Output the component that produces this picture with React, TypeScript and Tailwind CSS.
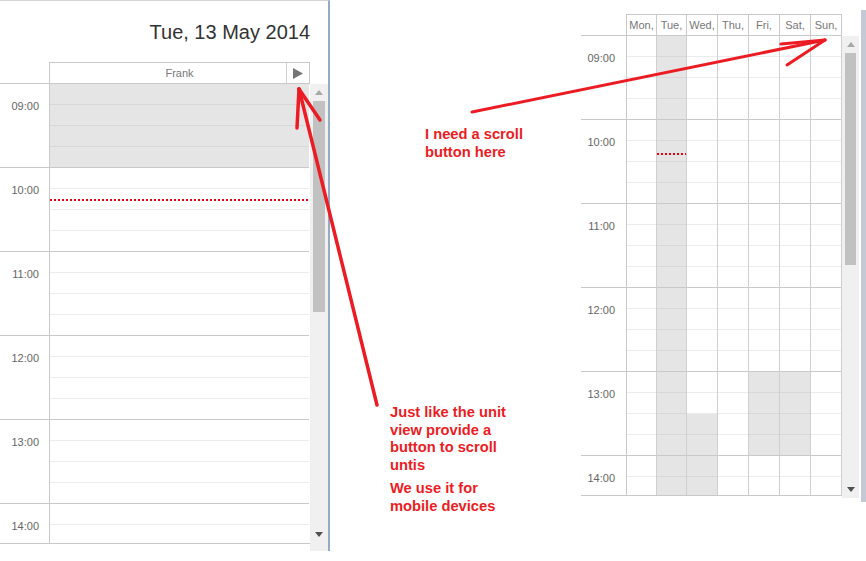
import React from "react";
import clsx from "clsx";

const hours = ["09:00", "10:00", "11:00", "12:00", "13:00", "14:00"];
const slots = Array.from({ length: 22 }, (_, i) => i);
const days = ["Mon,", "Tue,", "Wed,", "Thu,", "Fri,", "Sat,", "Sun,"];
const dayWidths = ["w-[30px]", "w-[30px]", "w-[31px]", "w-[31px]", "w-[31px]", "w-[31px]", "w-[31px]"];

// which quarter slots are greyed out per week day (0 = 09:00)
const weekGray: Record<number, (i: number) => boolean> = {
  1: () => true,
  2: (i) => i >= 18,
  4: (i) => i >= 16 && i <= 19,
  5: (i) => i >= 16 && i <= 19,
};

const Slot = ({ i, gray }: { i: number; gray: boolean }) => (
  <div
    className={clsx(
      "h-[21px] border-b",
      i % 4 === 3 ? "border-[#c9c9c9]" : gray ? "border-[#d8d8d8]" : "border-[#ececec]",
      gray ? "bg-[#e5e5e5]" : "bg-white"
    )}
  />
);

const TimeColumn = ({ width, pr }: { width: string; pr: string }) => (
  <div className={clsx("shrink-0 border-r border-[#c9c9c9]", width)}>
    {hours.map((h) => (
      <div key={h} className={clsx("h-[84px] border-b border-[#c9c9c9] pt-[16px] text-right text-[11px] leading-[13px] text-[#666]", pr)}>
        {h}
      </div>
    ))}
  </div>
);

const NowLine = ({ top }: { top: string }) => (
  <div className={clsx("absolute left-0 right-0 h-[2px] bg-[repeating-linear-gradient(90deg,#e6000f_0_2px,transparent_2px_4px)]", top)} />
);

const UpArrow = () => (
  <svg width="8" height="5" viewBox="0 0 8 5">
    <polygon points="0,5 8,5 4,0" fill="#a8a8a8" />
  </svg>
);

const DownArrow = () => (
  <svg width="8" height="5" viewBox="0 0 8 5">
    <polygon points="0,0 8,0 4,5" fill="#505050" />
  </svg>
);

const ScrollBar = ({ size, thumb }: { size: string; thumb: string }) => (
  <div className={clsx("flex shrink-0 flex-col bg-[#f0f0f0]", size)}>
    <div className="flex h-[17px] items-center justify-center">
      <UpArrow />
    </div>
    <div className={clsx("mx-[3px] bg-[#c1c1c1]", thumb)} />
    <div className="flex-1" />
    <div className="flex h-[17px] items-center justify-center">
      <DownArrow />
    </div>
  </div>
);

const UnitView = () => (
  <div className="flex h-[551px] w-[330px] shrink-0 flex-col border-t border-r-2 border-t-[#d4d4d4] border-r-[#95aac4] bg-white">
    {/* Date title */}
    <div className="flex h-[61px] items-center justify-end pr-[18px] text-[20px] text-[#333]">
      Tue, 13 May 2014
    </div>

    {/* Unit header */}
    <div className="flex h-[22px]">
      <div className="w-[49px] border-b border-[#c9c9c9]" />
      <div className="flex w-[261px] border border-[#c9c9c9]">
        <div className="w-[23px]" />
        <div className="flex flex-1 items-center justify-center text-[11px] text-[#777]">Frank</div>
        <div className="flex w-[23px] items-center justify-center border-l border-[#d4d4d4]">
          <svg width="10" height="11" viewBox="0 0 10 11">
            <polygon points="0,0 10,5.5 0,11" fill="#767676" />
          </svg>
        </div>
      </div>
    </div>

    {/* Body */}
    <div className="flex">
      <div className="flex h-[460px] w-[310px] shrink-0 overflow-hidden border-b border-[#c9c9c9]">
        <TimeColumn width="w-[50px]" pr="pr-[10px]" />
        <div className="relative flex-1 border-r border-white">
          {slots.map((i) => (
            <Slot key={i} i={i} gray={i < 4} />
          ))}
          <NowLine top="top-[115px]" />
        </div>
      </div>
      <div className="flex w-[18px] shrink-0 flex-col">
        <ScrollBar size="h-[459px] w-[18px]" thumb="h-[211px]" />
        <div className="h-[8px] bg-[#f0f0f0]" />
      </div>
    </div>
  </div>
);

const WeekView = () => (
  <div className="flex w-[285px] shrink-0">
    <div className="flex w-[278px] flex-col pt-[14px]">
      {/* Day header */}
      <div className="flex h-[22px]">
        <div className="w-[45px] border-b border-[#c9c9c9]" />
        {days.map((d, di) => (
          <div
            key={d}
            className={clsx(
              "flex items-center justify-center border-t border-r border-b border-[#c9c9c9] text-[11px] text-[#777]",
              di === 0 ? "w-[31px] border-l" : dayWidths[di]
            )}
          >
            {d}
          </div>
        ))}
      </div>

      {/* Body */}
      <div className="flex">
        <div className="flex h-[460px] w-[261px] shrink-0 overflow-hidden border-b border-[#c9c9c9]">
          <TimeColumn width="w-[46px]" pr="pr-[11px]" />
          {days.map((d, di) => (
            <div key={d} className={clsx("relative shrink-0 border-r border-[#cfcfcf]", dayWidths[di])}>
              {slots.map((i) => (
                <Slot key={i} i={i} gray={weekGray[di] ? weekGray[di](i) : false} />
              ))}
              {di === 1 && <NowLine top="top-[117px]" />}
            </div>
          ))}
        </div>
        <ScrollBar size="h-[462px] w-[17px]" thumb="h-[212px]" />
      </div>
    </div>
    <div className="ml-[2px] mt-[10px] h-[492px] w-[5px] bg-[#c4c9d5]" />
  </div>
);

const Notes = () => (
  <div className="flex w-[251px] shrink-0 flex-col text-[14.7px] font-bold leading-[18px] text-[#ec1c24]">
    <p className="mt-[125px] pl-[95px]">
      I need a scroll
      <br />
      button here
    </p>
    <div className="mt-[243px] pl-[60px] leading-[17.7px]">
      <p>
        Just like the unit
        <br />
        view provide a
        <br />
        button to scroll
        <br />
        untis
      </p>
      <p className="mt-[5px]">
        We use it for
        <br />
        mobile devices
      </p>
    </div>
  </div>
);

export default function App() {
  return (
    <div className="relative flex h-[561px] w-[866px] overflow-hidden bg-white font-['Liberation_Sans',Arial,sans-serif]">
      <UnitView />
      <Notes />
      <WeekView />

      {/* hand-drawn arrows */}
      <svg
        className="pointer-events-none absolute left-0 top-0"
        width="866"
        height="561"
        viewBox="0 0 866 561"
        fill="none"
        stroke="#ec1c24"
        strokeWidth="3.5"
        strokeLinecap="round"
      >
        <path d="M377 405 L299 89" />
        <path d="M299 89 L297 128" />
        <path d="M299 89 L320 120" />
        <path d="M472 112 L825 40" strokeWidth="3" />
        <path d="M825 40 L781 44" strokeWidth="3" />
        <path d="M825 40 L787 65" strokeWidth="3" />
      </svg>
    </div>
  );
}
